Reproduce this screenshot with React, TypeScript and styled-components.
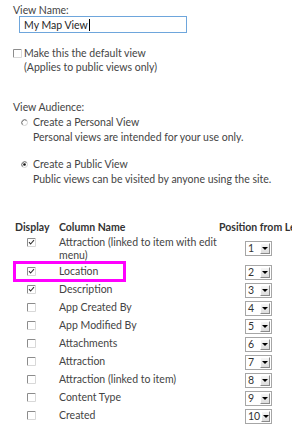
import React from 'react'
import styled, { createGlobalStyle } from 'styled-components'

const GlobalStyle = createGlobalStyle`
  html, body {
    margin: 0;
    padding: 0;
    background: #ffffff;
    overflow: hidden;
  }
`

const Page = styled.div`
  padding: 4px 0 0 13px;
  font-family: Lato, 'Open Sans', sans-serif;
  font-size: 10.5px;
  color: #444444;
  white-space: nowrap;
`

const FieldLabel = styled.div<{ $top?: number }>`
  line-height: ${p => (p.$top ? 14 : 12)}px;
  margin-top: ${p => p.$top || 0}px;
`

const NameInput = styled.div`
  box-sizing: border-box;
  width: 168px;
  height: 17px;
  margin-left: 6px;
  padding-left: 4px;
  border: 1px solid #6ea6dc;
  display: flex;
  align-items: center;
  color: #262626;
`

const Caret = styled.span`
  display: inline-block;
  width: 1px;
  height: 12px;
  background: #000000;
  margin-left: 1px;
`

const OptionRow = styled.div<{ $top: number; $indent: number; $lh: number }>`
  display: flex;
  align-items: flex-start;
  margin-top: ${p => p.$top}px;
  padding-left: ${p => p.$indent}px;
  line-height: ${p => p.$lh}px;
`

const OptionMark = styled.span<{ $offset: number; $gap: number }>`
  display: flex;
  margin-top: ${p => p.$offset}px;
  margin-right: ${p => p.$gap}px;
`

const OptionText = styled.div`
  display: flex;
  flex-direction: column;
`

const Hint = styled.span``

const TableHeader = styled.div`
  display: grid;
  grid-template-columns: 44px 160px 1fr;
  margin: 33px 0 0 2px;
  line-height: 14px;
  font-weight: 700;
  color: #333333;
`

const TableRow = styled.div`
  position: relative;
  display: grid;
  grid-template-columns: 44px 160px 1fr;
  align-items: start;
  margin-left: 2px;
  padding: 1.5px 0;
  min-height: 15px;
  line-height: 13px;

  &:first-of-type {
    margin-top: 3px;
  }
`

const DisplayCell = styled.div`
  display: flex;
  padding: 2px 0 0 12px;
`

const NameCell = styled.div`
  white-space: normal;
`

const PositionCell = styled.div`
  align-self: center;
  padding-left: 26px;
`

const SelectBox = styled.div`
  box-sizing: border-box;
  display: flex;
  width: 27px;
  height: 15px;
  border: 1px solid #a6a6a6;
  background: #ffffff;
`

const SelectValue = styled.span`
  flex: 1;
  padding-left: 2px;
  line-height: 13px;
  color: #333333;
`

const DropButton = styled.span`
  box-sizing: border-box;
  width: 10px;
  margin: 1px;
  display: flex;
  align-items: center;
  justify-content: center;
  background: linear-gradient(#f6f6f6, #dcdcdc);
  border-top: 1px solid #ffffff;
  border-left: 1px solid #ffffff;
  border-right: 1px solid #8a8a8a;
  border-bottom: 1px solid #8a8a8a;

  &::after {
    content: '';
    border-left: 3px solid transparent;
    border-right: 3px solid transparent;
    border-top: 3px solid #000000;
  }
`

const Highlight = styled.span`
  position: absolute;
  left: -2px;
  top: -2px;
  width: 113px;
  height: 21px;
  box-sizing: border-box;
  border: 3px solid #ff00ff;
  pointer-events: none;
`

const CheckBox = ({ checked }: { checked?: boolean }) => (
  <svg width="9" height="9" viewBox="0 0 9 9">
    <rect x="0" y="0" width="9" height="9" fill="#ffffff" />
    <path d="M0.5 8.5 V0.5 H8.5" fill="none" stroke="#8c8c8c" />
    <path d="M8.5 0.5 V8.5 H0.5" fill="none" stroke="#d8d8d8" />
    {checked && (
      <polyline points="2,4.2 3.6,6 7,2.2" fill="none" stroke="#333333" strokeWidth="1.1" />
    )}
  </svg>
)

const Radio = ({ checked }: { checked?: boolean }) => (
  <svg width="7" height="7" viewBox="0 0 7 7">
    <circle cx="3.5" cy="3.5" r="3" fill="#ffffff" stroke="#d2d2d2" />
    <path d="M1.4 5.6 A3 3 0 0 1 5.6 1.4" fill="none" stroke="#6e6e6e" />
    {checked && <circle cx="3.5" cy="3.5" r="1.3" fill="#111111" />}
  </svg>
)

interface ColumnType {
  name: string
  checked: boolean
}

const columns: ColumnType[] = [
  { name: 'Attraction (linked to item with edit menu)', checked: true },
  { name: 'Location', checked: true },
  { name: 'Description', checked: true },
  { name: 'App Created By', checked: false },
  { name: 'App Modified By', checked: false },
  { name: 'Attachments', checked: false },
  { name: 'Attraction', checked: false },
  { name: 'Attraction (linked to item)', checked: false },
  { name: 'Content Type', checked: false },
  { name: 'Created', checked: false },
]

const App: React.FC = (): JSX.Element => {
  const rows = columns.map((column, i) => (
    <TableRow key={column.name}>
      {column.name === 'Location' && <Highlight />}
      <DisplayCell>
        <CheckBox checked={column.checked} />
      </DisplayCell>
      <NameCell>{column.name}</NameCell>
      <PositionCell>
        <SelectBox>
          <SelectValue>{i + 1}</SelectValue>
          <DropButton />
        </SelectBox>
      </PositionCell>
    </TableRow>
  ))

  return (
    <>
      <GlobalStyle />
      <Page>
        <FieldLabel>View Name:</FieldLabel>
        <NameInput>
          My Map View
          <Caret />
        </NameInput>

        <OptionRow $top={13} $indent={0} $lh={14}>
          <OptionMark $offset={3} $gap={2}>
            <CheckBox />
          </OptionMark>
          <OptionText>
            <span>Make this the default view</span>
            <Hint>(Applies to public views only)</Hint>
          </OptionText>
        </OptionRow>

        <FieldLabel $top={26}>View Audience:</FieldLabel>
        <OptionRow $top={1} $indent={8} $lh={15}>
          <OptionMark $offset={4} $gap={5}>
            <Radio />
          </OptionMark>
          <OptionText>
            <span>Create a Personal View</span>
            <Hint>Personal views are intended for your use only.</Hint>
          </OptionText>
        </OptionRow>
        <OptionRow $top={12} $indent={8} $lh={15}>
          <OptionMark $offset={4} $gap={5}>
            <Radio checked />
          </OptionMark>
          <OptionText>
            <span>Create a Public View</span>
            <Hint>Public views can be visited by anyone using the site.</Hint>
          </OptionText>
        </OptionRow>

        <TableHeader>
          <span>Display</span>
          <span>Column Name</span>
          <span>Position from Left</span>
        </TableHeader>
        {rows}
      </Page>
    </>
  )
}

export default App
